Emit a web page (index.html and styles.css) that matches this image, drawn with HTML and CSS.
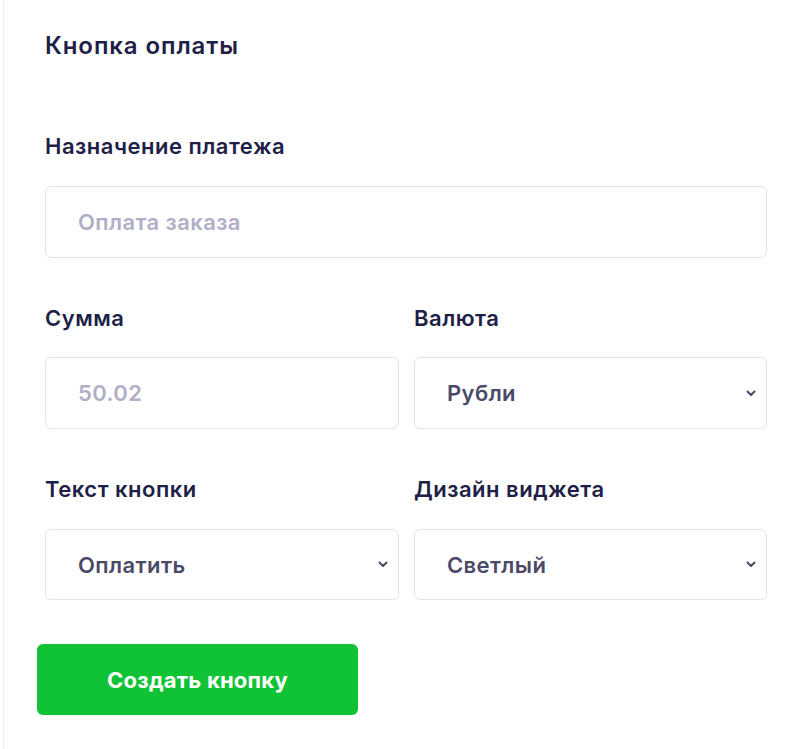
FILE: index.html
```html
<!DOCTYPE html>
<html lang="ru">
<head>
<meta charset="utf-8">
<title>Кнопка оплаты</title>
<link rel="stylesheet" href="styles.css">
</head>
<body>
<div class="page">
  <div class="panel">
    <h2 class="title">Кнопка оплаты</h2>
    <div class="field field-first">
      <label class="label">Назначение платежа</label>
      <div class="control"><span class="placeholder">Оплата заказа</span></div>
    </div>
    <div class="row">
      <div class="field">
        <label class="label">Сумма</label>
        <div class="control"><span class="placeholder">50.02</span></div>
      </div>
      <div class="field">
        <label class="label">Валюта</label>
        <div class="control select"><span class="value">Рубли</span>
          <svg class="chev" width="10" height="7" viewBox="0 0 10 7"><path d="M1.5 1.5 L5 5 L8.5 1.5" fill="none" stroke="#4b4a68" stroke-width="2" stroke-linecap="round" stroke-linejoin="round"/></svg>
        </div>
      </div>
    </div>
    <div class="row row-second">
      <div class="field">
        <label class="label">Текст кнопки</label>
        <div class="control select"><span class="value">Оплатить</span>
          <svg class="chev" width="10" height="7" viewBox="0 0 10 7"><path d="M1.5 1.5 L5 5 L8.5 1.5" fill="none" stroke="#4b4a68" stroke-width="2" stroke-linecap="round" stroke-linejoin="round"/></svg>
        </div>
      </div>
      <div class="field">
        <label class="label">Дизайн виджета</label>
        <div class="control select"><span class="value">Светлый</span>
          <svg class="chev" width="10" height="7" viewBox="0 0 10 7"><path d="M1.5 1.5 L5 5 L8.5 1.5" fill="none" stroke="#4b4a68" stroke-width="2" stroke-linecap="round" stroke-linejoin="round"/></svg>
        </div>
      </div>
    </div>
    <button class="btn">Создать кнопку</button>
  </div>
</div>
</body>
</html>
```

FILE: styles.css
```css
* { box-sizing: border-box; }
html, body { margin: 0; padding: 0; background: #ffffff; }
body {
  font-family: Inter, "Noto Sans", "Liberation Sans", sans-serif;
  color: #211f47;
}
.page {
  margin-left: 3px;
  border-left: 1px solid #eeeef2;
  min-height: 749px;
}
.panel {
  width: 764px;
  padding: 32px 0 0 41px;
}
.title {
  margin: 0;
  font-size: 24px;
  line-height: 28px;
  font-weight: 600;
  letter-spacing: 0.9px;
  color: #211f47;
}
.field { display: flex; flex-direction: column; }
.field-first { margin-top: 73px; width: 722px; }
.label {
  font-size: 22px;
  line-height: 26px;
  font-weight: 600;
  letter-spacing: 0.5px;
  color: #211f47;
  margin-bottom: 27px;
}
.control {
  height: 72px;
  border: 1px solid #e3e3ea;
  border-radius: 6px;
  display: flex;
  align-items: center;
  padding: 0 10px 0 32px;
  font-size: 22px;
  font-weight: 600;
  letter-spacing: 0.4px;
}
.placeholder { color: #b0afc7; }
.value { color: #4b4a68; flex: 1; }
.chev { flex: none; }
.row {
  display: grid;
  grid-template-columns: 354px 353px;
  column-gap: 15px;
  width: 722px;
  margin-top: 47px;
}
.row .label { margin-bottom: 26px; }
.row-second .control { height: 71px; }
.row-second .label { margin-bottom: 27px; }
.btn {
  display: flex;
  align-items: center;
  justify-content: center;
  margin: 44px 0 0 -8px;
  width: 321px;
  height: 71px;
  border: none;
  border-radius: 6px;
  background: #10c334;
  color: #ffffff;
  font-family: Inter, "Noto Sans", "Liberation Sans", sans-serif;
  font-size: 22px;
  font-weight: 700;
  letter-spacing: 0.2px;
}
```
